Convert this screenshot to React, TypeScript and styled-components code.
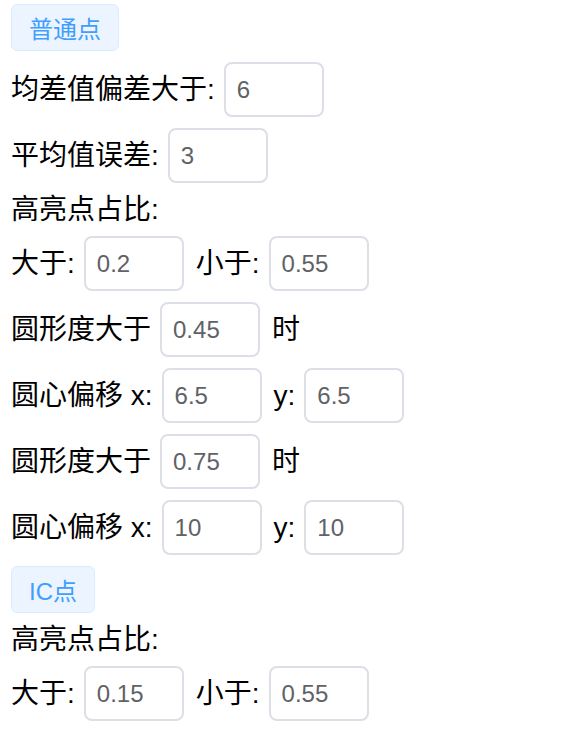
import React from 'react';
import styled, { createGlobalStyle } from 'styled-components';

const GlobalStyle = createGlobalStyle`
    body {
        margin: 0;
        background: #fff;
        font-family: "Liberation Sans", "Noto Sans CJK SC", sans-serif;
        color: #000;
    }
`;

const Page = styled.div`
    display: flex;
    flex-direction: column;
    align-items: flex-start;
    gap: 11px;
    padding: 4px 11px;
`;

const Tag = styled.span`
    box-sizing: border-box;
    display: inline-flex;
    align-items: center;
    height: 47px;
    padding: 0 17px;
    font-size: 24px;
    color: #409eff;
    background: #ecf5ff;
    border: 1px solid #d9ecff;
    border-radius: 6px;
`;

const Row = styled.div`
    display: flex;
    align-items: center;
    font-size: 28px;
    line-height: 31px;
`;

const Title = styled.div`
    font-size: 28px;
    line-height: 31px;
`;

const Label = styled.span`
    white-space: pre;
    margin-right: 9px;
`;

const NumberInput = styled.input`
    box-sizing: border-box;
    width: 100px;
    height: 55px;
    margin-right: 12px;
    padding: 0 11px;
    border: 2px solid #dcdfe6;
    border-radius: 8px;
    font-family: "Liberation Sans", sans-serif;
    font-size: 24px;
    color: #606266;
    background: #fff;
    outline: none;
`;

interface FieldProps {
    label?: string
    value: string
    suffix?: string
}

function Field({ label, value, suffix }: FieldProps) {
    return <>
        {label && <Label>{label}</Label>}
        <NumberInput defaultValue={value} />
        {suffix && <Label>{suffix}</Label>}
    </>;
}

export default function App(): React.JSX.Element {
    return <>
        <GlobalStyle />
        <Page>
            <Tag>普通点</Tag>
            <Row><Field label='均差值偏差大于:' value='6' /></Row>
            <Row><Field label='平均值误差:' value='3' /></Row>
            <Title>高亮点占比:</Title>
            <Row>
                <Field label='大于:' value='0.2' />
                <Field label='小于:' value='0.55' />
            </Row>
            <Row><Field label='圆形度大于' value='0.45' suffix='时' /></Row>
            <Row>
                <Field label='圆心偏移 x:' value='6.5' />
                <Field label='y:' value='6.5' />
            </Row>
            <Row><Field label='圆形度大于' value='0.75' suffix='时' /></Row>
            <Row>
                <Field label='圆心偏移 x:' value='10' />
                <Field label='y:' value='10' />
            </Row>
            <Tag>IC点</Tag>
            <Title>高亮点占比:</Title>
            <Row>
                <Field label='大于:' value='0.15' />
                <Field label='小于:' value='0.55' />
            </Row>
        </Page>
    </>;
}
